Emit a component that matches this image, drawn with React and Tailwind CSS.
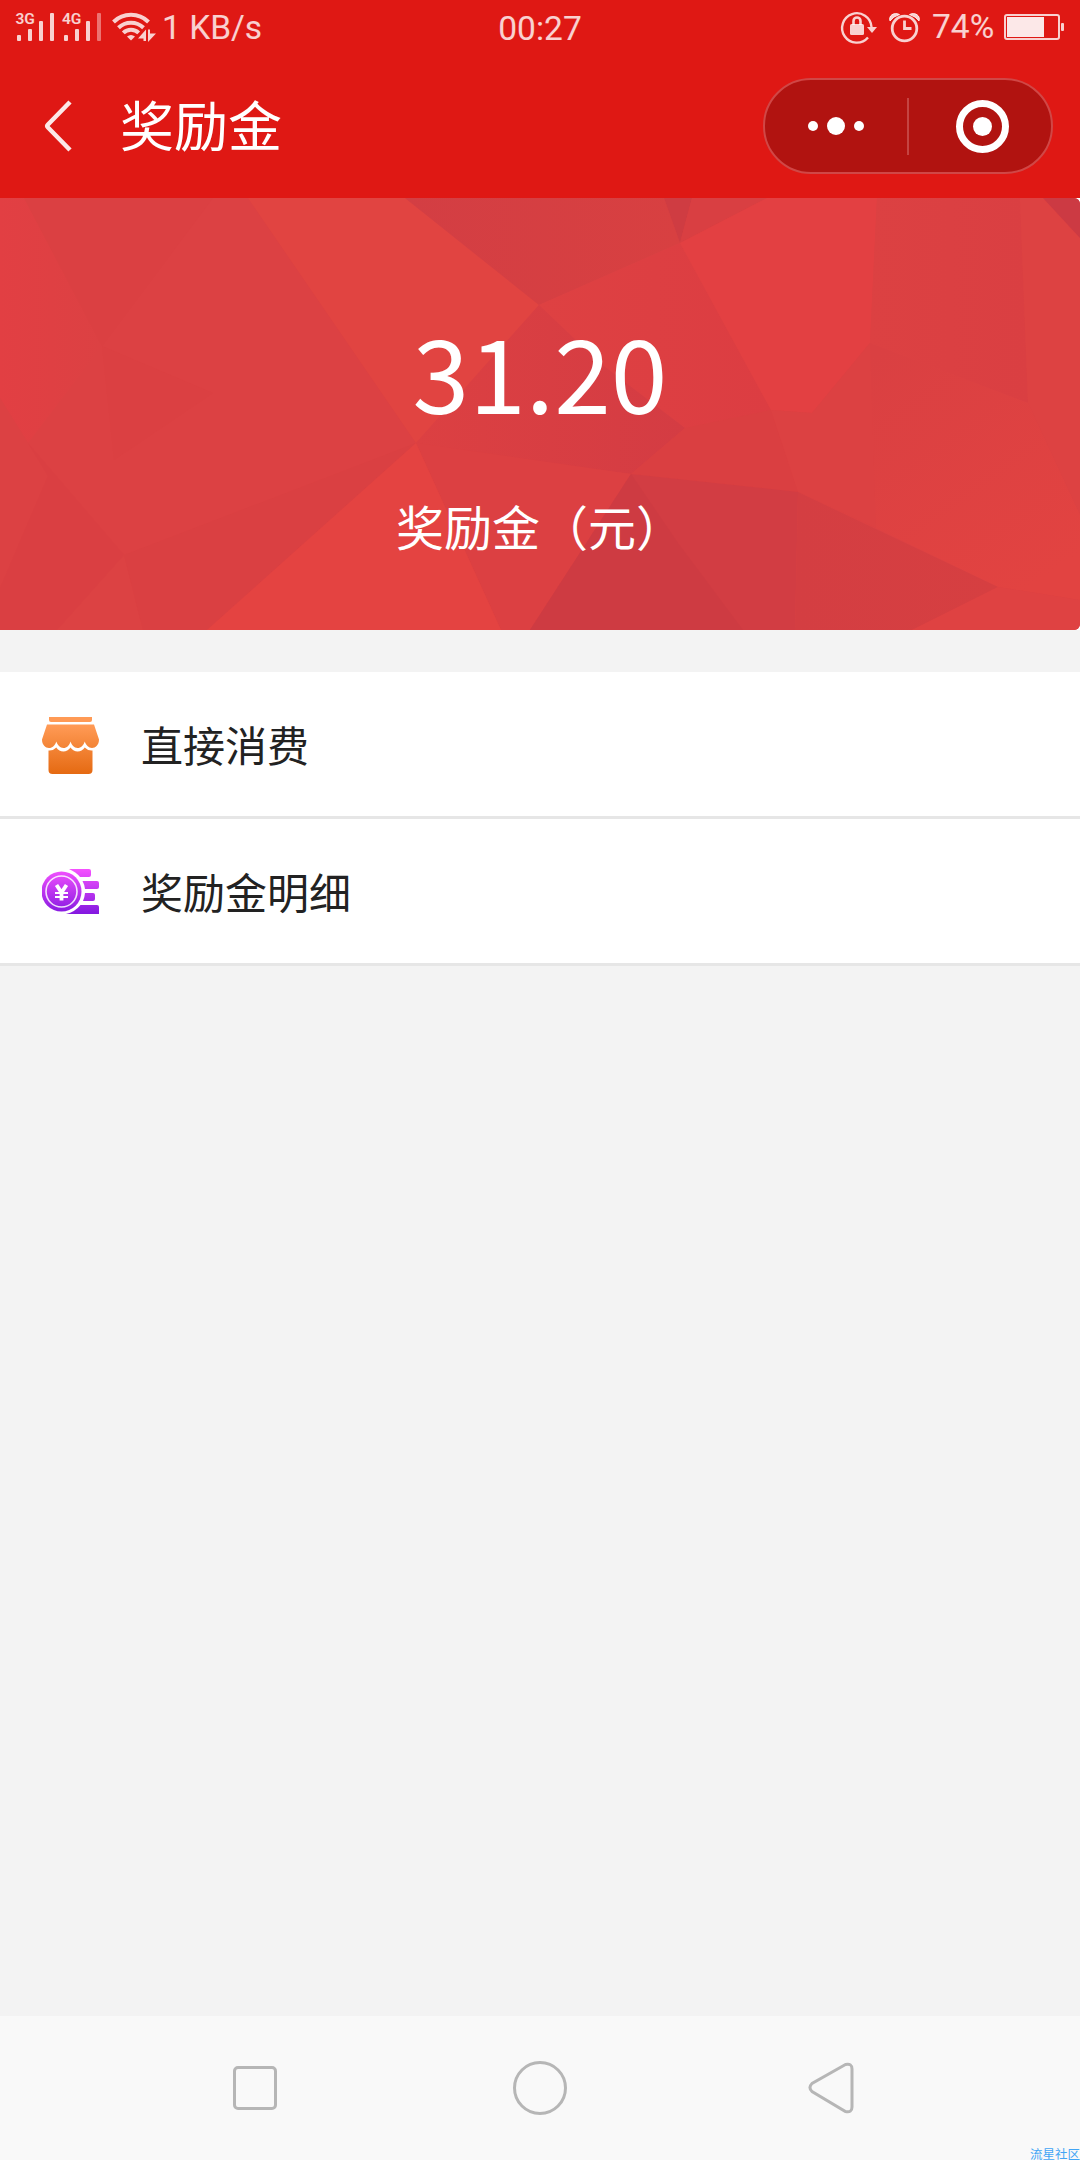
import React from 'react';

const StatusBar = () => {
  return (
    <div className="h-14 shrink-0 grid grid-cols-3 items-center text-white/80 font-[Roboto,sans-serif] text-[33.5px] leading-none">
      <div className="flex items-center">
        {/* Signal, wifi */}
        <svg width="162" height="56" viewBox="0 0 162 56" fill="currentColor">
          <text x="15.5" y="24" fontSize="15.5" fontWeight="600" fontFamily="Roboto">3G</text>
          <rect x="17" y="35" width="4" height="6" rx="1" />
          <rect x="28" y="29" width="4" height="12" rx="1" />
          <rect x="39" y="21" width="4" height="20" rx="1" />
          <rect x="50" y="13" width="4" height="28" rx="1" />
          <text x="62" y="24" fontSize="15.5" fontWeight="600" fontFamily="Roboto">4G</text>
          <rect x="64" y="35" width="4" height="6" rx="1" />
          <rect x="75" y="29" width="4" height="12" rx="1" />
          <rect x="86" y="21" width="4" height="20" rx="1" />
          <rect x="97" y="13" width="4" height="28" rx="1" opacity="0.5" />
          <g fill="none" stroke="currentColor" strokeWidth="4">
            <path d="M113.5 22 A25 25 0 0 1 148.5 22" />
            <path d="M118.5 27.7 A18 18 0 0 1 143.5 27.7" />
            <path d="M123.3 32.9 A11 11 0 0 1 138.7 32.9" />
          </g>
          <path d="M127 36.5 Q131 33.5 135 36.5 L131 40.5 Z" />
          <path d="M138 38.5 L146 29.5 V41 H143.5 V38.5 Z" />
          <path d="M148 29.5 H150 V33.5 H156 L148 42 Z" />
        </svg>
        <span>1 KB/s</span>
      </div>
      <div className="text-center pt-[2px]">00:27</div>
      <div className="flex items-center justify-end">
        <svg width="90" height="56" viewBox="836 0 90 56" fill="none" stroke="currentColor">
          {/* Rotation lock */}
          <path d="M868 37.5 A14.7 14.7 0 1 1 871.5 27" strokeWidth="2.4" />
          <path d="M867 27 H877 L872 33 Z" fill="currentColor" stroke="none" />
          <rect x="850" y="24" width="14" height="11" rx="1.5" fill="currentColor" stroke="none" />
          <path d="M853.5 25 V21 a3.5 3.5 0 0 1 7 0 V25" strokeWidth="2.6" />
          {/* Alarm */}
          <circle cx="904.5" cy="28.5" r="12.3" strokeWidth="2.8" />
          <path d="M904.5 20.5 V28.5 H911.5" strokeWidth="2.8" />
          <path d="M890 21 C888 16 894 11.5 899.5 14.5 Q893 16.5 890 21 Z M919 21 C921 16 915 11.5 909.5 14.5 Q916 16.5 919 21 Z" fill="currentColor" strokeWidth="1" />
        </svg>
        <span className="w-[78px] pl-[6px] pb-[2px]">74%</span>
        <svg width="76" height="56" viewBox="1004 0 76 56">
          <rect x="1005" y="15" width="54" height="24" rx="2" fill="none" stroke="currentColor" strokeWidth="2" />
          <rect x="1007" y="17" width="37" height="20" fill="#fff" fillOpacity="0.9" />
          <rect x="1061" y="23" width="3" height="8" rx="1" fill="currentColor" />
        </svg>
      </div>
    </div>
  );
};

const Header = () => {
  return (
    <header className="h-[142px] shrink-0 flex items-center pl-[44px] pr-[27px] pb-[2px]">
      <svg width="30" height="54" viewBox="44 99 30 54" fill="none" stroke="#fff" strokeOpacity="0.9" strokeWidth="4.5">
        <path d="M70 102 L48 124.5 Q46.5 126 48 127.5 L70 150" />
      </svg>
      <h1 className="ml-[46px] pb-[4px] text-[54px] leading-none text-white">奖励金</h1>
      <div className="ml-auto w-[290px] h-24 rounded-full border-2 border-[#d04746] bg-[#b11310] flex items-center">
        <button className="w-[142px] flex items-center justify-center gap-[9px]">
          <span className="size-[10px] rounded-full bg-white"></span>
          <span className="size-[18px] rounded-full bg-white"></span>
          <span className="size-[10px] rounded-full bg-white"></span>
        </button>
        <span className="w-[2px] h-[57px] bg-[#c54442]"></span>
        <button className="flex-1 flex items-center justify-center">
          <span className="ml-1 size-[53px] rounded-full border-[7px] border-white flex items-center justify-center">
            <span className="size-[19px] rounded-full bg-white"></span>
          </span>
        </button>
      </div>
    </header>
  );
};

const facets = [
  { points: '0,0 24,0 102,148 28,245 0,200', fill: 'url(#facetLeft)' },
  { points: '24,0 213,0 102,148', fill: '#db4042' },
  { points: '102,148 114,262 213,195', fill: '#db4042' },
  { points: '0,200 28,245 48,278 0,400', fill: '#dc4143' },
  { points: '28,245 124,357 57,432 0,432 0,390 48,278', fill: '#da3f42' },
  { points: '124,357 143,432 57,432', fill: '#dc4243' },
  { points: '124,357 416,245 207,432 143,432', fill: '#da4042' },
  { points: '248,0 405,0 539,107 416,245', fill: '#e14441' },
  { points: '405,0 664,0 680,45 539,107', fill: 'url(#facetTop)' },
  { points: '664,0 692,0 680,45', fill: '#cf3c42' },
  { points: '692,0 767,0 680,45', fill: '#d93f42' },
  { points: '539,107 680,45 771,212 685,230 600,165', fill: 'url(#facetMid)' },
  { points: '539,107 600,165 685,230 631,276 540,264 416,245', fill: 'url(#facetCenter)' },
  { points: '680,45 767,0 877,0 870,145 812,215 771,212', fill: '#e34042' },
  { points: '877,0 1020,0 1028,205 870,145', fill: 'url(#facetRight)' },
  { points: '1020,0 1043,0 1080,40 1080,317 1028,205', fill: '#dd4242' },
  { points: '1043,0 1080,0 1080,40', fill: '#cc3a43' },
  { points: '416,245 631,276 530,432 501,432', fill: '#dc4042' },
  { points: '416,245 501,432 207,432', fill: '#e44341' },
  { points: '685,230 771,212 798,294 631,276', fill: '#da3f41' },
  { points: '771,212 812,215 870,145 876,330 798,294', fill: '#dc4142' },
  { points: '870,145 1028,205 1080,317 1080,402 998,389 876,330', fill: 'url(#facetLow)' },
  { points: '631,276 798,294 795,432 530,432', fill: '#d23d43' },
  { points: '631,276 678,345 743,432 530,432', fill: '#ce3b42' },
  { points: '798,294 998,389 912,432 795,432', fill: 'url(#facetDark)' },
  { points: '998,389 1080,402 1080,432 912,432', fill: '#df4242' },
];

const Banner = ({ amount }) => {
  return (
    <section className="h-[432px] shrink-0 bg-white grid">
      <svg className="col-start-1 row-start-1 rounded-r-md" width="1080" height="432" viewBox="0 0 1080 432">
        <defs>
          <linearGradient id="facetLeft">
            <stop offset="0" stopColor="#e23f43" />
            <stop offset="1" stopColor="#dc4143" />
          </linearGradient>
          <linearGradient id="facetTop">
            <stop offset="0" stopColor="#d33e43" />
            <stop offset="1" stopColor="#d84041" />
          </linearGradient>
          <linearGradient id="facetMid">
            <stop offset="0" stopColor="#de4142" />
            <stop offset="1" stopColor="#dc3d42" />
          </linearGradient>
          <linearGradient id="facetCenter">
            <stop offset="0" stopColor="#dc4042" />
            <stop offset="1" stopColor="#d43c43" />
          </linearGradient>
          <linearGradient id="facetRight">
            <stop offset="0" stopColor="#dc4142" />
            <stop offset="1" stopColor="#da3f42" />
          </linearGradient>
          <linearGradient id="facetDark">
            <stop offset="0" stopColor="#d43e42" />
            <stop offset="1" stopColor="#d63f41" />
          </linearGradient>
          <linearGradient id="facetLow" gradientUnits="userSpaceOnUse" x1="870" y1="160" x2="1030" y2="390">
            <stop offset="0" stopColor="#da4042" />
            <stop offset="1" stopColor="#e24341" />
          </linearGradient>
        </defs>
        <rect width="1080" height="432" fill="#dc4143" />
        {facets.map((facet, index) => (
          <polygon key={index} points={facet.points} fill={facet.fill} />
        ))}
      </svg>
      <div className="col-start-1 row-start-1 z-10 flex flex-col items-center text-white">
        <p className="mt-[116px] text-[102px] leading-[112px]">{amount}</p>
        <p className="mt-[75px] text-[48px] leading-[48px]">奖励金（元）</p>
      </div>
    </section>
  );
};

const ShopIcon = () => (
  <svg width="57" height="57" viewBox="0 0 57 57">
    <defs>
      <linearGradient id="shop" gradientUnits="userSpaceOnUse" x1="0" y1="0" x2="0" y2="57">
        <stop offset="0.15" stopColor="#ff9a55" />
        <stop offset="1" stopColor="#e56a12" />
      </linearGradient>
    </defs>
    <g fill="url(#shop)">
      <path d="M7 0 H50 V3 Q50 5 48 5 H9 Q7 5 7 3 Z" />
      <path d="M5 7.5 H52 L57 22.5 C57 28 53.5 31 50 31 C46.5 31 44 28 42.7 24.5 C41.5 28.5 39 31 35.6 31 C32 31 29.7 28 28.5 24.5 C27.3 28.5 25 31 21.4 31 C18 31 15.5 28 14.3 24.5 C13 28.5 10.5 31 7 31 C3.5 31 0 28 0 22.5 Z" />
      <path d="M6.5 33.5 Q11 34 14.3 30.5 Q17 34.5 21.4 34.5 Q25.5 34.5 28.5 30.5 Q31.5 34.5 35.6 34.5 Q40 34.5 42.7 30.5 Q46 34 50.5 33.5 V53 Q50.5 57 46.5 57 H10.5 Q6.5 57 6.5 53 Z" />
    </g>
  </svg>
);

const CoinIcon = () => (
  <svg width="57" height="57" viewBox="0 0 57 57">
    <defs>
      <linearGradient id="coin" gradientUnits="userSpaceOnUse" x1="0" y1="5" x2="0" y2="50">
        <stop offset="0" stopColor="#f552ff" />
        <stop offset="1" stopColor="#8318e0" />
      </linearGradient>
    </defs>
    <g fill="url(#coin)">
      <path d="M27 5 H47 Q49 5 49 7 V11 Q49 13 47 13 H38 Q34 8 27 5 Z" />
      <path d="M40.5 17 H55 Q57 17 57 19 V23 Q57 25 55 25 H43 Q42.5 20.5 40.5 17 Z" />
      <path d="M43 29 H51 Q53 29 53 31 V35 Q53 37 51 37 H41 Q42.7 33 43 29 Z" />
      <path d="M38.5 41 H55 Q57 41 57 43 V50 H24 Q33 48 38.5 41 Z" />
      <circle cx="19.5" cy="27.5" r="20" />
    </g>
    <circle cx="19.5" cy="27.5" r="15.5" fill="none" stroke="#fff" strokeOpacity="0.85" strokeWidth="1.6" />
    <g fill="none" stroke="#fff">
      <path d="M14.5 21 L19.5 28.5 L24.5 21 M19.5 28 V36.5" strokeWidth="3.8" />
      <path d="M13 29 H26 M13 33 H26" strokeWidth="2.2" />
    </g>
  </svg>
);

const menuItems = [
  { id: 'spend', label: '直接消费', icon: <ShopIcon /> },
  { id: 'detail', label: '奖励金明细', icon: <CoinIcon /> },
];

const NavBar = () => {
  return (
    <nav className="relative h-36 shrink-0 bg-[#f9f9f9]">
      <div className="h-full flex items-center justify-between pl-[233px] pr-[225px]">
        <span className="size-[44px] rounded-[5px] border-[3px] border-[#b6b6b6]"></span>
        <span className="mr-[5px] size-[54px] rounded-full border-[3px] border-[#b6b6b6]"></span>
        <svg width="47" height="54" viewBox="0 0 47 54" fill="none" stroke="#b6b6b6" strokeWidth="3">
          <path d="M37.5 3.5 L4 22.5 Q0 26.5 4 30.5 L37.5 50.5 Q44 52 44 46 V8 Q44 2 37.5 3.5 Z" />
        </svg>
      </div>
      <span className="absolute right-0 bottom-0 text-[12.5px] leading-[12px] text-[#42a5f5] whitespace-nowrap">流星社区</span>
    </nav>
  );
};

const App = () => {
  return (
    <div className="w-[1080px] h-[2160px] flex flex-col bg-[#f3f3f3] font-['Noto_Sans_CJK_SC',sans-serif]">
      <div className="bg-[#df1814] flex flex-col">
        <StatusBar />
        <Header />
      </div>
      <Banner amount="31.20" />

      {/* Menu */}
      <ul className="mt-[42px] flex-1">
        {menuItems.map(item => (
          <li key={item.id} className="h-[147px] flex items-center bg-white border-b-[3px] border-[#e6e6e6] pl-[42px] pt-[3px]">
            {item.icon}
            <span className="ml-[42px] pb-[4px] text-[42px] leading-none text-[#222]">{item.label}</span>
          </li>
        ))}
      </ul>

      <NavBar />
    </div>
  );
};

export default App;
